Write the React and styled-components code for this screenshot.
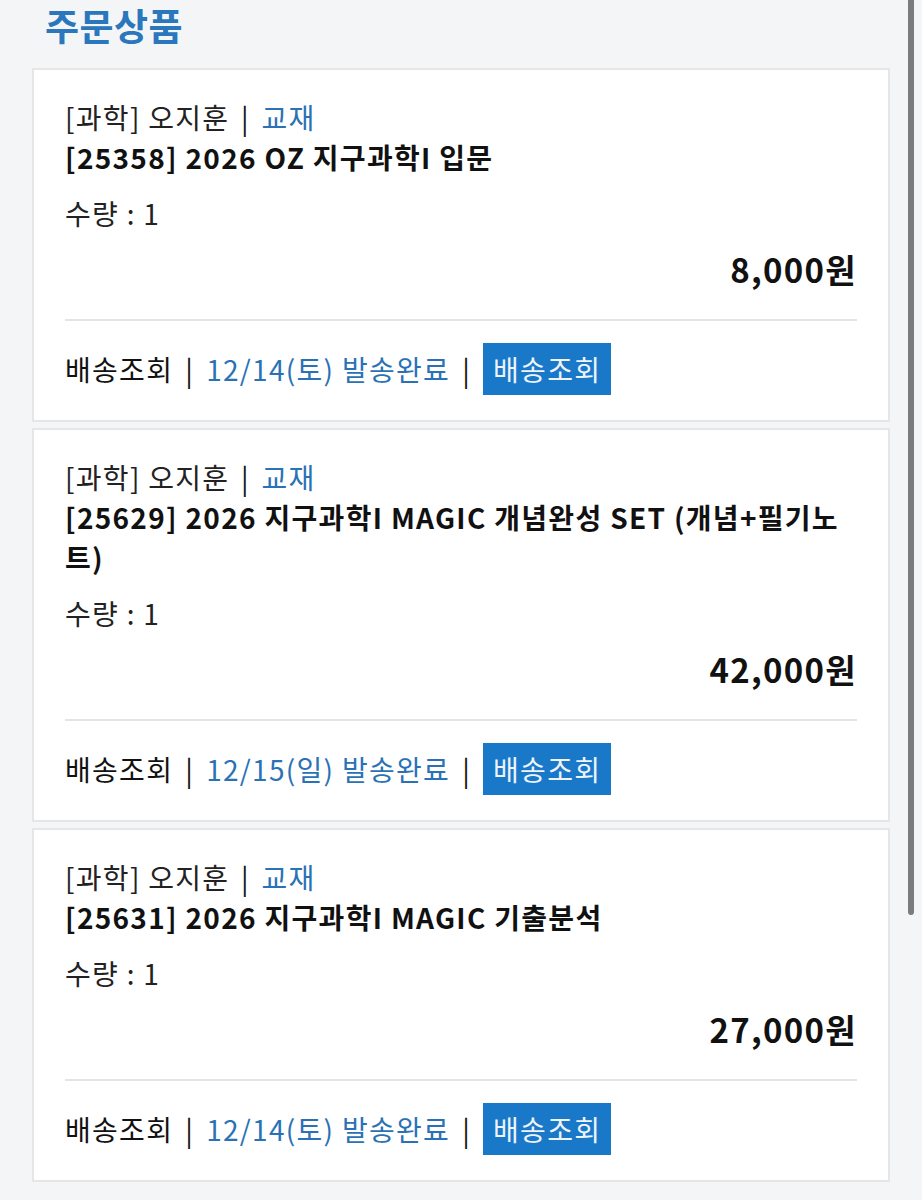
import React from "react";
import styled, { createGlobalStyle } from "styled-components";

const GlobalStyle = createGlobalStyle`
  html, body {
    margin: 0;
    padding: 0;
    background: #f4f5f7;
  }
  body {
    font-family: "Noto Sans CJK KR", "Noto Sans", sans-serif;
    color: #111;
  }
`;

const orders = [
  {
    title: "[25358] 2026 OZ 지구과학I 입문",
    qty: 1,
    price: "8,000",
    date: "12/14(토)",
  },
  {
    title: "[25629] 2026 지구과학I MAGIC 개념완성 SET (개념+필기노트)",
    qty: 1,
    price: "42,000",
    date: "12/15(일)",
  },
  {
    title: "[25631] 2026 지구과학I MAGIC 기출분석",
    qty: 1,
    price: "27,000",
    date: "12/14(토)",
  },
];

function App() {
  return (
    <Page>
      <GlobalStyle />
      <Heading>주문상품</Heading>
      <List>
        {orders.map((o, i) => (
          <Card key={i}>
            <Info>
              <Category>
                [과학] 오지훈 <Bar>|</Bar> <Blue>교재</Blue>
              </Category>
              <Title>{o.title}</Title>
              <Qty>수량 : {o.qty}</Qty>
              <Price>{o.price}원</Price>
            </Info>
            <Divider />
            <Delivery>
              <span>배송조회</span>
              <Bar>|</Bar>
              <Blue>{o.date} 발송완료</Blue>
              <Bar>|</Bar>
              <TrackButton>배송조회</TrackButton>
            </Delivery>
          </Card>
        ))}
      </List>
      <Scrollbar />
    </Page>
  );
}

const Page = styled.div`
  position: relative;
  min-height: 1200px;
  padding: 0 32px 20px;
  box-sizing: border-box;
`;

const Heading = styled.h1`
  margin: 0;
  padding: 2px 0 0 13px;
  height: 66px;
  font-size: 37px;
  font-weight: 700;
  line-height: 46px;
  letter-spacing: 0.5px;
  color: #2a77bd;
`;

const List = styled.div`
  display: flex;
  flex-direction: column;
  gap: 6px;
`;

const Card = styled.div`
  background: #fff;
  border: 2px solid #e6e6e6;
  padding: 0 31px 25px;
  font-size: 28px;
  letter-spacing: 1.3px;
`;

const Info = styled.div`
  padding-top: 27px;
  padding-bottom: 30px;
`;

const Category = styled.div`
  line-height: 40px;
  color: #222;
`;

const Bar = styled.span`
  margin: 0 4px;
  color: #111;
`;

const Blue = styled.span`
  color: #2a72b5;
`;

const Title = styled.div`
  font-weight: 700;
  line-height: 40px;
  color: #111;
  letter-spacing: 1.3px;
`;

const Qty = styled.div`
  margin-top: 16px;
  line-height: 40px;
  color: #222;
`;

const Price = styled.div`
  margin-top: 16px;
  text-align: right;
  font-size: 33px;
  font-weight: 600;
  line-height: 40px;
  color: #111;
`;

const Divider = styled.div`
  height: 2px;
  background: #e4e4e4;
`;

const Delivery = styled.div`
  display: flex;
  align-items: center;
  margin-top: 22px;
  line-height: 40px;
  color: #111;

  & > ${Bar} {
    margin: 0 12px;
  }
`;

const TrackButton = styled.button`
  height: 52px;
  padding: 0 10px;
  border: none;
  background: #1a78c9;
  color: #eef4fa;
  font-family: inherit;
  font-size: 28px;
  letter-spacing: 1.3px;
  cursor: pointer;
`;

const Scrollbar = styled.div`
  position: absolute;
  top: 0;
  right: 8px;
  width: 6px;
  height: 915px;
  border-radius: 0 0 3px 3px;
  background: #7c7c7c;
`;

export default App;
